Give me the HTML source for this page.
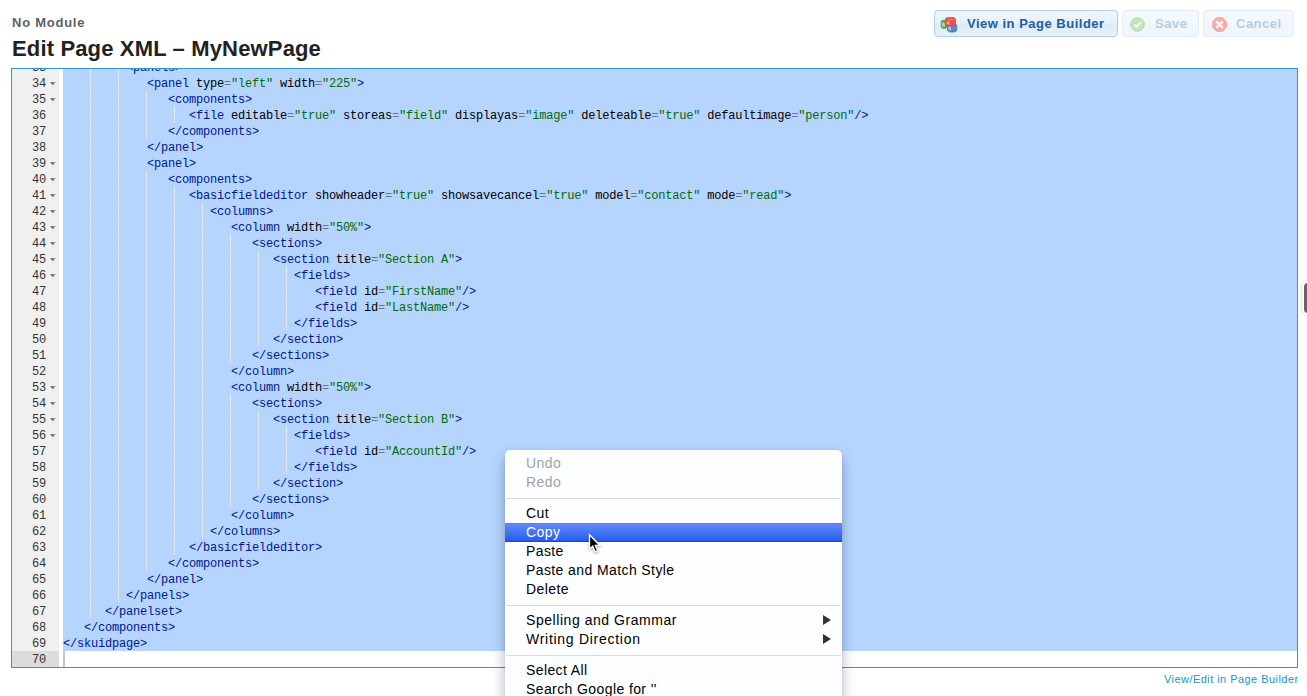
<!DOCTYPE html>
<html><head><meta charset="utf-8">
<style>
*{margin:0;padding:0;box-sizing:border-box}
html,body{width:1307px;height:696px;overflow:hidden;background:#fff}
body{position:relative;font-family:"Liberation Sans",sans-serif}
.mod{position:absolute;left:12px;top:15px;font-weight:bold;font-size:13px;letter-spacing:0.75px;color:#5f5f5f;white-space:nowrap}
.title{position:absolute;left:12px;top:36px;font-weight:bold;font-size:22px;letter-spacing:0.15px;color:#222;white-space:nowrap}
.btn{position:absolute;top:10px;height:27px;border:1px solid #b3cdeb;border-radius:4px;background:linear-gradient(#edf5fd 0,#e8f2fc 12px,#dcebf9 13px,#e6f1fb 25px);font-weight:bold;font-size:13px;color:#235c9c;white-space:nowrap}
.btn span{position:absolute;top:5px;letter-spacing:0.5px}
.btn.dis{border-color:#e3ecf7;background:linear-gradient(#f5f9fe 0,#f3f8fd 12px,#eff5fc 13px,#f2f7fd 25px);color:#b8cce2}
.btn svg{position:absolute}
.cursor{position:absolute;left:587px;top:533px;filter:drop-shadow(0 1px 1px rgba(0,0,0,.35))}
.ed{position:absolute;left:11px;top:68px;width:1287px;height:600px;border:1px solid #2a9bc9;overflow:hidden;background:#fff}
.gut{position:absolute;left:0;top:0;width:47px;height:598px;background:#f0f0f0}
.gact{position:absolute;left:0;width:47px;height:16px;background:#dcdcdc}
.gn{position:absolute;left:0;width:34px;height:16px;line-height:18px;text-align:right;font-family:"Liberation Mono",monospace;font-size:12px;letter-spacing:-0.2px;color:#333}
.fw{position:absolute;left:38px;width:5.5px;height:3.6px;background:#747474;clip-path:polygon(0 0,100% 0,50% 100%)}
.sel{position:absolute;left:51px;top:-10px;width:1234px;height:592px;background:#b5d5ff}
.cur{position:absolute;left:51px;top:582px;width:2px;height:16px;background:#c4c4c4}
.g{position:absolute;width:1px;height:15px;background:repeating-linear-gradient(#fff 0,#fff 1px,#d3d3d3 1px,#d3d3d3 2px)}
.ln{position:absolute;height:16px;line-height:18px;font-family:"Liberation Mono",monospace;font-size:12px;letter-spacing:-0.2px;color:#000;white-space:pre}
.ln i{font-style:normal}
.t{color:#00168e}.o{color:#687687}.s{color:#036a07}
.link{position:absolute;left:1164px;top:673px;font-size:11px;letter-spacing:0.45px;color:#2393c3;white-space:nowrap}
.sb{position:absolute;left:1302px;top:281px;width:12px;height:34px;border-radius:7px;background:#fff;box-shadow:0 0 3px rgba(0,0,0,.25)}
.sb div{position:absolute;left:2px;top:2px;width:8px;height:30px;border-radius:5px;background:#666}
.menu{position:absolute;left:505px;top:450px;width:337px;height:260px;background:rgba(253,254,255,.985);border-radius:5px 5px 0 0;box-shadow:0 0 1px rgba(0,0,40,.3),0 7px 14px rgba(0,0,40,.3)}
.mi{position:absolute;left:0;width:337px;height:19px;font-size:14px;color:#000;white-space:nowrap}
.mi span{position:absolute;left:21px;top:1px;letter-spacing:0.4px}
.mi.dis{color:#a2a2a2}
.mi.hl{background:linear-gradient(#5a7ff2 0,#5a7ff2 1px,#6589f5 1px,#255cf0 18px,#0a46e8 18px);color:#fff}
.sep{position:absolute;left:1px;width:335px;height:1px;background:#dcdcdc}
.arr{position:absolute;left:318px;top:4px;width:0;height:0;border-top:5px solid transparent;border-bottom:5px solid transparent;border-left:8px solid #333}
</style></head><body>
<div class="mod">No Module</div>
<div class="title">Edit Page XML &ndash; MyNewPage</div>
<div class="btn" style="left:934px;width:184px"><svg style="left:5px;top:5px" width="18" height="17" viewBox="0 0 18 17"><path d="M1.2,5.2 L3,4.2 L5.5,4.2 L7,5.2 L7,11 L5.5,12.5 L3,12.5 L1.2,11 Z" fill="#5ea555" stroke="#4a9342" stroke-width="0.7"/><path d="M2,6.5 L4,6.5 L5,7.5 L5,10.5 L2,10.5Z" fill="#b0d9a6"/><path d="M7.5,9 L9.5,7.8 L15,7.8 L16.8,9 L16.8,14.5 L15,16 L9.5,16 L7.5,14.5 Z" fill="#5d88c2" stroke="#4572ad" stroke-width="0.7"/><path d="M8.5,10.5 L11,10.5 L11,14.5 L8.5,14Z" fill="#aac5e7"/><path d="M5.5,2.8 L7.2,1.6 L13.8,1.6 L15.5,2.8 L15.5,8.6 L13.8,9.9 L7.2,9.9 L5.5,8.6 Z" fill="#e9504a" stroke="#d8443e" stroke-width="0.7"/><path d="M6.5,3 L14.5,3 L13,4.5 L8,4.5Z" fill="#f07a74"/><path d="M6.8,5.5 L9.5,6 L9.5,8.8 L6.8,8.2Z" fill="#f6aca7"/></svg><span style="left:32px">View in Page Builder</span></div>
<div class="btn dis" style="left:1122px;width:77px"><svg style="left:7px;top:6px" width="15" height="15" viewBox="0 0 15 15"><circle cx="7.5" cy="7.5" r="6.8" fill="#c0e3b8" stroke="#acd6a2" stroke-width="0.9"/><circle cx="7.5" cy="7.5" r="5.2" fill="none" stroke="#d3ecce" stroke-width="0.7"/><path d="M4.3,7.6 L6.6,9.8 L10.8,5.2" fill="none" stroke="#fff" stroke-width="1.9"/></svg><span style="left:32px">Save</span></div>
<div class="btn dis" style="left:1203px;width:91px"><svg style="left:8px;top:6px" width="15" height="15" viewBox="0 0 15 15"><path d="M4.6,0.6 L10.4,0.6 L14.4,4.6 L14.4,10.4 L10.4,14.4 L4.6,14.4 L0.6,10.4 L0.6,4.6 Z" fill="#fdaaaa" stroke="#fca0a0" stroke-width="0.8"/><path d="M4.3,4.3 L10.7,10.7 M10.7,4.3 L4.3,10.7" stroke="#fff" stroke-width="2.2"/></svg><span style="left:32px">Cancel</span></div>
<div class="ed">
<div class="gut"></div>
<div class="gact" style="top:582px"></div>
<div class="gn" style="top:-10px">33</div>
<div class="fw" style="top:-3px"></div>
<div class="gn" style="top:6px">34</div>
<div class="fw" style="top:13px"></div>
<div class="gn" style="top:22px">35</div>
<div class="fw" style="top:29px"></div>
<div class="gn" style="top:38px">36</div>
<div class="gn" style="top:54px">37</div>
<div class="gn" style="top:70px">38</div>
<div class="gn" style="top:86px">39</div>
<div class="fw" style="top:93px"></div>
<div class="gn" style="top:102px">40</div>
<div class="fw" style="top:109px"></div>
<div class="gn" style="top:118px">41</div>
<div class="fw" style="top:125px"></div>
<div class="gn" style="top:134px">42</div>
<div class="fw" style="top:141px"></div>
<div class="gn" style="top:150px">43</div>
<div class="fw" style="top:157px"></div>
<div class="gn" style="top:166px">44</div>
<div class="fw" style="top:173px"></div>
<div class="gn" style="top:182px">45</div>
<div class="fw" style="top:189px"></div>
<div class="gn" style="top:198px">46</div>
<div class="fw" style="top:205px"></div>
<div class="gn" style="top:214px">47</div>
<div class="gn" style="top:230px">48</div>
<div class="gn" style="top:246px">49</div>
<div class="gn" style="top:262px">50</div>
<div class="gn" style="top:278px">51</div>
<div class="gn" style="top:294px">52</div>
<div class="gn" style="top:310px">53</div>
<div class="fw" style="top:317px"></div>
<div class="gn" style="top:326px">54</div>
<div class="fw" style="top:333px"></div>
<div class="gn" style="top:342px">55</div>
<div class="fw" style="top:349px"></div>
<div class="gn" style="top:358px">56</div>
<div class="fw" style="top:365px"></div>
<div class="gn" style="top:374px">57</div>
<div class="gn" style="top:390px">58</div>
<div class="gn" style="top:406px">59</div>
<div class="gn" style="top:422px">60</div>
<div class="gn" style="top:438px">61</div>
<div class="gn" style="top:454px">62</div>
<div class="gn" style="top:470px">63</div>
<div class="gn" style="top:486px">64</div>
<div class="gn" style="top:502px">65</div>
<div class="gn" style="top:518px">66</div>
<div class="gn" style="top:534px">67</div>
<div class="gn" style="top:550px">68</div>
<div class="gn" style="top:566px">69</div>
<div class="gn act" style="top:582px">70</div>
<div class="sel"></div>
<div class="cur"></div>
<div class="g" style="top:-10px;left:78px"></div>
<div class="g" style="top:-10px;left:106px"></div>
<div class="g" style="top:6px;left:78px"></div>
<div class="g" style="top:6px;left:106px"></div>
<div class="g" style="top:22px;left:78px"></div>
<div class="g" style="top:22px;left:106px"></div>
<div class="g" style="top:22px;left:134px"></div>
<div class="g" style="top:38px;left:78px"></div>
<div class="g" style="top:38px;left:106px"></div>
<div class="g" style="top:38px;left:134px"></div>
<div class="g" style="top:38px;left:162px"></div>
<div class="g" style="top:54px;left:78px"></div>
<div class="g" style="top:54px;left:106px"></div>
<div class="g" style="top:54px;left:134px"></div>
<div class="g" style="top:70px;left:78px"></div>
<div class="g" style="top:70px;left:106px"></div>
<div class="g" style="top:86px;left:78px"></div>
<div class="g" style="top:86px;left:106px"></div>
<div class="g" style="top:102px;left:78px"></div>
<div class="g" style="top:102px;left:106px"></div>
<div class="g" style="top:102px;left:134px"></div>
<div class="g" style="top:118px;left:78px"></div>
<div class="g" style="top:118px;left:106px"></div>
<div class="g" style="top:118px;left:134px"></div>
<div class="g" style="top:118px;left:162px"></div>
<div class="g" style="top:134px;left:78px"></div>
<div class="g" style="top:134px;left:106px"></div>
<div class="g" style="top:134px;left:134px"></div>
<div class="g" style="top:134px;left:162px"></div>
<div class="g" style="top:134px;left:190px"></div>
<div class="g" style="top:150px;left:78px"></div>
<div class="g" style="top:150px;left:106px"></div>
<div class="g" style="top:150px;left:134px"></div>
<div class="g" style="top:150px;left:162px"></div>
<div class="g" style="top:150px;left:190px"></div>
<div class="g" style="top:166px;left:78px"></div>
<div class="g" style="top:166px;left:106px"></div>
<div class="g" style="top:166px;left:134px"></div>
<div class="g" style="top:166px;left:162px"></div>
<div class="g" style="top:166px;left:190px"></div>
<div class="g" style="top:166px;left:218px"></div>
<div class="g" style="top:182px;left:78px"></div>
<div class="g" style="top:182px;left:106px"></div>
<div class="g" style="top:182px;left:134px"></div>
<div class="g" style="top:182px;left:162px"></div>
<div class="g" style="top:182px;left:190px"></div>
<div class="g" style="top:182px;left:218px"></div>
<div class="g" style="top:182px;left:246px"></div>
<div class="g" style="top:198px;left:78px"></div>
<div class="g" style="top:198px;left:106px"></div>
<div class="g" style="top:198px;left:134px"></div>
<div class="g" style="top:198px;left:162px"></div>
<div class="g" style="top:198px;left:190px"></div>
<div class="g" style="top:198px;left:218px"></div>
<div class="g" style="top:198px;left:246px"></div>
<div class="g" style="top:198px;left:274px"></div>
<div class="g" style="top:214px;left:78px"></div>
<div class="g" style="top:214px;left:106px"></div>
<div class="g" style="top:214px;left:134px"></div>
<div class="g" style="top:214px;left:162px"></div>
<div class="g" style="top:214px;left:190px"></div>
<div class="g" style="top:214px;left:218px"></div>
<div class="g" style="top:214px;left:246px"></div>
<div class="g" style="top:214px;left:274px"></div>
<div class="g" style="top:230px;left:78px"></div>
<div class="g" style="top:230px;left:106px"></div>
<div class="g" style="top:230px;left:134px"></div>
<div class="g" style="top:230px;left:162px"></div>
<div class="g" style="top:230px;left:190px"></div>
<div class="g" style="top:230px;left:218px"></div>
<div class="g" style="top:230px;left:246px"></div>
<div class="g" style="top:230px;left:274px"></div>
<div class="g" style="top:246px;left:78px"></div>
<div class="g" style="top:246px;left:106px"></div>
<div class="g" style="top:246px;left:134px"></div>
<div class="g" style="top:246px;left:162px"></div>
<div class="g" style="top:246px;left:190px"></div>
<div class="g" style="top:246px;left:218px"></div>
<div class="g" style="top:246px;left:246px"></div>
<div class="g" style="top:246px;left:274px"></div>
<div class="g" style="top:262px;left:78px"></div>
<div class="g" style="top:262px;left:106px"></div>
<div class="g" style="top:262px;left:134px"></div>
<div class="g" style="top:262px;left:162px"></div>
<div class="g" style="top:262px;left:190px"></div>
<div class="g" style="top:262px;left:218px"></div>
<div class="g" style="top:262px;left:246px"></div>
<div class="g" style="top:278px;left:78px"></div>
<div class="g" style="top:278px;left:106px"></div>
<div class="g" style="top:278px;left:134px"></div>
<div class="g" style="top:278px;left:162px"></div>
<div class="g" style="top:278px;left:190px"></div>
<div class="g" style="top:278px;left:218px"></div>
<div class="g" style="top:294px;left:78px"></div>
<div class="g" style="top:294px;left:106px"></div>
<div class="g" style="top:294px;left:134px"></div>
<div class="g" style="top:294px;left:162px"></div>
<div class="g" style="top:294px;left:190px"></div>
<div class="g" style="top:310px;left:78px"></div>
<div class="g" style="top:310px;left:106px"></div>
<div class="g" style="top:310px;left:134px"></div>
<div class="g" style="top:310px;left:162px"></div>
<div class="g" style="top:310px;left:190px"></div>
<div class="g" style="top:326px;left:78px"></div>
<div class="g" style="top:326px;left:106px"></div>
<div class="g" style="top:326px;left:134px"></div>
<div class="g" style="top:326px;left:162px"></div>
<div class="g" style="top:326px;left:190px"></div>
<div class="g" style="top:326px;left:218px"></div>
<div class="g" style="top:342px;left:78px"></div>
<div class="g" style="top:342px;left:106px"></div>
<div class="g" style="top:342px;left:134px"></div>
<div class="g" style="top:342px;left:162px"></div>
<div class="g" style="top:342px;left:190px"></div>
<div class="g" style="top:342px;left:218px"></div>
<div class="g" style="top:342px;left:246px"></div>
<div class="g" style="top:358px;left:78px"></div>
<div class="g" style="top:358px;left:106px"></div>
<div class="g" style="top:358px;left:134px"></div>
<div class="g" style="top:358px;left:162px"></div>
<div class="g" style="top:358px;left:190px"></div>
<div class="g" style="top:358px;left:218px"></div>
<div class="g" style="top:358px;left:246px"></div>
<div class="g" style="top:358px;left:274px"></div>
<div class="g" style="top:374px;left:78px"></div>
<div class="g" style="top:374px;left:106px"></div>
<div class="g" style="top:374px;left:134px"></div>
<div class="g" style="top:374px;left:162px"></div>
<div class="g" style="top:374px;left:190px"></div>
<div class="g" style="top:374px;left:218px"></div>
<div class="g" style="top:374px;left:246px"></div>
<div class="g" style="top:374px;left:274px"></div>
<div class="g" style="top:390px;left:78px"></div>
<div class="g" style="top:390px;left:106px"></div>
<div class="g" style="top:390px;left:134px"></div>
<div class="g" style="top:390px;left:162px"></div>
<div class="g" style="top:390px;left:190px"></div>
<div class="g" style="top:390px;left:218px"></div>
<div class="g" style="top:390px;left:246px"></div>
<div class="g" style="top:390px;left:274px"></div>
<div class="g" style="top:406px;left:78px"></div>
<div class="g" style="top:406px;left:106px"></div>
<div class="g" style="top:406px;left:134px"></div>
<div class="g" style="top:406px;left:162px"></div>
<div class="g" style="top:406px;left:190px"></div>
<div class="g" style="top:406px;left:218px"></div>
<div class="g" style="top:406px;left:246px"></div>
<div class="g" style="top:422px;left:78px"></div>
<div class="g" style="top:422px;left:106px"></div>
<div class="g" style="top:422px;left:134px"></div>
<div class="g" style="top:422px;left:162px"></div>
<div class="g" style="top:422px;left:190px"></div>
<div class="g" style="top:422px;left:218px"></div>
<div class="g" style="top:438px;left:78px"></div>
<div class="g" style="top:438px;left:106px"></div>
<div class="g" style="top:438px;left:134px"></div>
<div class="g" style="top:438px;left:162px"></div>
<div class="g" style="top:438px;left:190px"></div>
<div class="g" style="top:454px;left:78px"></div>
<div class="g" style="top:454px;left:106px"></div>
<div class="g" style="top:454px;left:134px"></div>
<div class="g" style="top:454px;left:162px"></div>
<div class="g" style="top:454px;left:190px"></div>
<div class="g" style="top:470px;left:78px"></div>
<div class="g" style="top:470px;left:106px"></div>
<div class="g" style="top:470px;left:134px"></div>
<div class="g" style="top:470px;left:162px"></div>
<div class="g" style="top:486px;left:78px"></div>
<div class="g" style="top:486px;left:106px"></div>
<div class="g" style="top:486px;left:134px"></div>
<div class="g" style="top:502px;left:78px"></div>
<div class="g" style="top:502px;left:106px"></div>
<div class="g" style="top:518px;left:78px"></div>
<div class="g" style="top:518px;left:106px"></div>
<div class="g" style="top:534px;left:78px"></div>
<div class="ln" style="top:-10px;left:114px"><i class="t">&lt;panels</i><i class="t">&gt;</i></div>
<div class="ln" style="top:6px;left:135px"><i class="t">&lt;panel</i> type<i class="o">=</i><i class="s">&quot;left&quot;</i> width<i class="o">=</i><i class="s">&quot;225&quot;</i><i class="t">&gt;</i></div>
<div class="ln" style="top:22px;left:156px"><i class="t">&lt;components</i><i class="t">&gt;</i></div>
<div class="ln" style="top:38px;left:177px"><i class="t">&lt;file</i> editable<i class="o">=</i><i class="s">&quot;true&quot;</i> storeas<i class="o">=</i><i class="s">&quot;field&quot;</i> displayas<i class="o">=</i><i class="s">&quot;image&quot;</i> deleteable<i class="o">=</i><i class="s">&quot;true&quot;</i> defaultimage<i class="o">=</i><i class="s">&quot;person&quot;</i><i class="t">/&gt;</i></div>
<div class="ln" style="top:54px;left:156px"><i class="t">&lt;/components</i><i class="t">&gt;</i></div>
<div class="ln" style="top:70px;left:135px"><i class="t">&lt;/panel</i><i class="t">&gt;</i></div>
<div class="ln" style="top:86px;left:135px"><i class="t">&lt;panel</i><i class="t">&gt;</i></div>
<div class="ln" style="top:102px;left:156px"><i class="t">&lt;components</i><i class="t">&gt;</i></div>
<div class="ln" style="top:118px;left:177px"><i class="t">&lt;basicfieldeditor</i> showheader<i class="o">=</i><i class="s">&quot;true&quot;</i> showsavecancel<i class="o">=</i><i class="s">&quot;true&quot;</i> model<i class="o">=</i><i class="s">&quot;contact&quot;</i> mode<i class="o">=</i><i class="s">&quot;read&quot;</i><i class="t">&gt;</i></div>
<div class="ln" style="top:134px;left:198px"><i class="t">&lt;columns</i><i class="t">&gt;</i></div>
<div class="ln" style="top:150px;left:219px"><i class="t">&lt;column</i> width<i class="o">=</i><i class="s">&quot;50%&quot;</i><i class="t">&gt;</i></div>
<div class="ln" style="top:166px;left:240px"><i class="t">&lt;sections</i><i class="t">&gt;</i></div>
<div class="ln" style="top:182px;left:261px"><i class="t">&lt;section</i> title<i class="o">=</i><i class="s">&quot;Section A&quot;</i><i class="t">&gt;</i></div>
<div class="ln" style="top:198px;left:282px"><i class="t">&lt;fields</i><i class="t">&gt;</i></div>
<div class="ln" style="top:214px;left:303px"><i class="t">&lt;field</i> id<i class="o">=</i><i class="s">&quot;FirstName&quot;</i><i class="t">/&gt;</i></div>
<div class="ln" style="top:230px;left:303px"><i class="t">&lt;field</i> id<i class="o">=</i><i class="s">&quot;LastName&quot;</i><i class="t">/&gt;</i></div>
<div class="ln" style="top:246px;left:282px"><i class="t">&lt;/fields</i><i class="t">&gt;</i></div>
<div class="ln" style="top:262px;left:261px"><i class="t">&lt;/section</i><i class="t">&gt;</i></div>
<div class="ln" style="top:278px;left:240px"><i class="t">&lt;/sections</i><i class="t">&gt;</i></div>
<div class="ln" style="top:294px;left:219px"><i class="t">&lt;/column</i><i class="t">&gt;</i></div>
<div class="ln" style="top:310px;left:219px"><i class="t">&lt;column</i> width<i class="o">=</i><i class="s">&quot;50%&quot;</i><i class="t">&gt;</i></div>
<div class="ln" style="top:326px;left:240px"><i class="t">&lt;sections</i><i class="t">&gt;</i></div>
<div class="ln" style="top:342px;left:261px"><i class="t">&lt;section</i> title<i class="o">=</i><i class="s">&quot;Section B&quot;</i><i class="t">&gt;</i></div>
<div class="ln" style="top:358px;left:282px"><i class="t">&lt;fields</i><i class="t">&gt;</i></div>
<div class="ln" style="top:374px;left:303px"><i class="t">&lt;field</i> id<i class="o">=</i><i class="s">&quot;AccountId&quot;</i><i class="t">/&gt;</i></div>
<div class="ln" style="top:390px;left:282px"><i class="t">&lt;/fields</i><i class="t">&gt;</i></div>
<div class="ln" style="top:406px;left:261px"><i class="t">&lt;/section</i><i class="t">&gt;</i></div>
<div class="ln" style="top:422px;left:240px"><i class="t">&lt;/sections</i><i class="t">&gt;</i></div>
<div class="ln" style="top:438px;left:219px"><i class="t">&lt;/column</i><i class="t">&gt;</i></div>
<div class="ln" style="top:454px;left:198px"><i class="t">&lt;/columns</i><i class="t">&gt;</i></div>
<div class="ln" style="top:470px;left:177px"><i class="t">&lt;/basicfieldeditor</i><i class="t">&gt;</i></div>
<div class="ln" style="top:486px;left:156px"><i class="t">&lt;/components</i><i class="t">&gt;</i></div>
<div class="ln" style="top:502px;left:135px"><i class="t">&lt;/panel</i><i class="t">&gt;</i></div>
<div class="ln" style="top:518px;left:114px"><i class="t">&lt;/panels</i><i class="t">&gt;</i></div>
<div class="ln" style="top:534px;left:93px"><i class="t">&lt;/panelset</i><i class="t">&gt;</i></div>
<div class="ln" style="top:550px;left:72px"><i class="t">&lt;/components</i><i class="t">&gt;</i></div>
<div class="ln" style="top:566px;left:51px"><i class="t">&lt;/skuidpage</i><i class="t">&gt;</i></div>
<div class="ln" style="top:582px;left:51px"></div>
</div>
<div class="link">View/Edit in Page Builder</div>
<div class="sb"><div></div></div>
<div class="menu">
<div class="mi dis" style="top:4px"><span>Undo</span></div>
<div class="mi dis" style="top:23px"><span>Redo</span></div>
<div class="sep" style="top:48px"></div>
<div class="mi" style="top:54px"><span>Cut</span></div>
<div class="mi hl" style="top:73px"><span>Copy</span></div>
<div class="mi" style="top:92px"><span>Paste</span></div>
<div class="mi" style="top:111px"><span>Paste and Match Style</span></div>
<div class="mi" style="top:130px"><span>Delete</span></div>
<div class="sep" style="top:155px"></div>
<div class="mi" style="top:161px"><span style="letter-spacing:0.55px">Spelling and Grammar</span><div class="arr"></div></div>
<div class="mi" style="top:180px"><span style="letter-spacing:0.72px">Writing Direction</span><div class="arr"></div></div>
<div class="sep" style="top:205px"></div>
<div class="mi" style="top:211px"><span>Select All</span></div>
<div class="mi" style="top:230px"><span>Search Google for ''</span></div>
</div>
<svg class="cursor" width="16" height="22" viewBox="0 0 16 22"><path d="M2.5,1.8 L2.5,16.3 L5.7,13.2 L8.1,18.8 L10.7,17.8 L8.4,12.4 L12.9,12.4 Z" fill="#000" stroke="#fff" stroke-width="1.4" stroke-linejoin="miter"/></svg>
</body></html>
